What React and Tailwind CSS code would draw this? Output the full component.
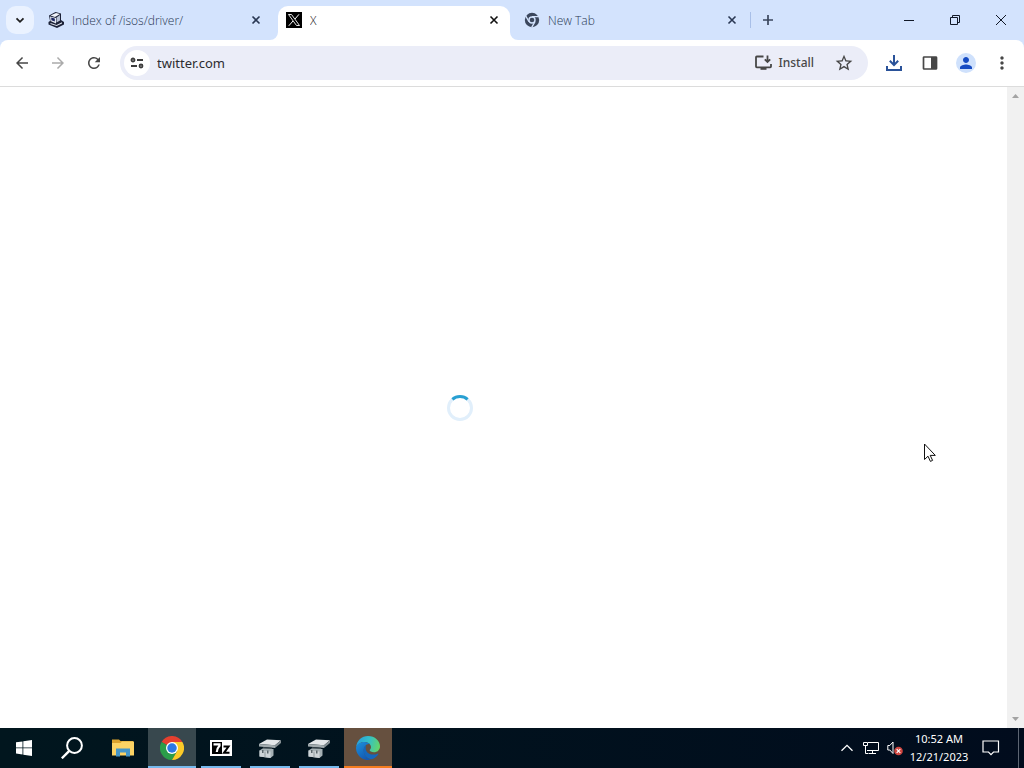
import React from "react";
import {
  MdArrowBack,
  MdArrowForward,
  MdRefresh,
  MdStarOutline,
  MdPerson,
  MdMoreVert,
} from "react-icons/md";

const svgProps = { xmlns: "http://www.w3.org/2000/svg", "aria-hidden": true };

function ServerFavicon() {
  return (
    <svg {...svgProps} viewBox="0 0 16 16" className="size-4 shrink-0">
      <path d="M1 3.500L7.500 0 13 1.500V8l3 2v2.500L9 16 .5 12.500V10L2 9z" fill="#1c2238" />
      <path d="M2.500 3.500L8 1l4 1-5 3z" fill="#f1f4fb" />
      <path d="M2 4.500l6 1.500v5.500L2.500 9z" fill="#e6ebf5" />
      <path d="M3.200 5.500l3.600 1v3l-3.400-1.200z" fill="#1b2560" />
      <path d="M8.500 5.500L12 3v5.500l-3.500 2z" fill="#b8c2d6" />
      <path d="M2.500 11l6 2 5.500-2.700v1.200L8.700 14 2.500 11.900z" fill="#dfe4ef" />
    </svg>
  );
}

function XFavicon() {
  return (
    <svg {...svgProps} viewBox="0 0 16 16" className="size-4 shrink-0">
      <rect width="16" height="16" fill="#000" />
      <path d="M2.500 2.500h3l8 11h-3z" fill="none" stroke="#fff" strokeWidth="0.9" />
      <path d="M13 2.300L9 7M7 9l-4.200 4.800" stroke="#fff" strokeWidth="1" />
    </svg>
  );
}

function GreyChrome() {
  return (
    <svg {...svgProps} viewBox="0 0 16 16" className="size-4 shrink-0">
      <circle cx="8" cy="8" r="7.2" fill="#3b475d" />
      <circle cx="8" cy="8" r="3.7" fill="#d3e3fd" />
      <path d="M8 4.700h6.800M5 9.700L1.700 3.900M11 9.700l-3.300 5.600" stroke="#d3e3fd" strokeWidth="1.3" />
      <circle cx="8" cy="8" r="2.3" fill="#3b475d" />
    </svg>
  );
}

function ChromeLogo() {
  return (
    <svg {...svgProps} viewBox="0 0 48 48" className="size-6">
      <path d="M24 24L3.200 12A24 24 0 0 1 44.800 12z" fill="#e5402f" />
      <path d="M24 24L3.200 12A24 24 0 0 0 24 48l10.400-18z" fill="#2b9d49" />
      <path d="M24 12h20.800A24 24 0 0 1 24 48l10.400-18z" fill="#fbca28" />
      <path d="M24 12a12 12 0 0 0-10.400 6L3.200 12 24 24z" fill="#e5402f" />
      <circle cx="24" cy="24" r="12" fill="#fff" />
      <circle cx="24" cy="24" r="9.5" fill="#2c78e4" />
    </svg>
  );
}

function CloseIcon() {
  return (
    <svg {...svgProps} viewBox="0 0 16 16" className="size-4" stroke="currentColor" strokeWidth="1.6">
      <path d="M4.500 4.500l7 7M11.500 4.500l-7 7" />
    </svg>
  );
}

function TabFoot({ side }) {
  return (
    <svg
      {...svgProps}
      viewBox="0 0 8 8"
      className={side === "left" ? "absolute -left-2 bottom-0 size-2" : "absolute -right-2 bottom-0 size-2"}
    >
      <path d={side === "left" ? "M8 0v8H0a8 8 0 0 0 8-8z" : "M0 0v8h8a8 8 0 0 1-8-8z"} fill="#fff" />
    </svg>
  );
}

function Tab({ icon, title, active }) {
  return (
    <div
      role="tab"
      aria-selected={!!active}
      className={
        active
          ? "relative flex h-[34px] min-w-0 max-w-[232px] flex-1 items-center gap-2 rounded-t-[10px] bg-white px-2 pb-1.5 text-[#111111]"
          : "flex h-[34px] min-w-0 max-w-[232px] flex-1 items-center gap-2 px-2 pb-1.5 text-[#2a3854]"
      }
    >
      {active && <TabFoot side="left" />}
      {icon}
      <span className="min-w-0 flex-1 truncate pt-0.5 font-['Open_Sans','Noto_Sans',sans-serif] text-[12px] font-light leading-4">
        {title}
      </span>
      <button type="button" aria-label={"Close " + title} className="size-4 shrink-0">
        <CloseIcon />
      </button>
      {active && <TabFoot side="right" />}
    </div>
  );
}

function TabStrip() {
  return (
    <header className="flex h-10 items-end bg-[#d3e3fd]">
      <button
        type="button"
        aria-label="Search tabs"
        className="mb-1.5 ml-1.5 grid size-7 shrink-0 place-items-center rounded-[10px] bg-[#eaf2ff] text-[#1f1f1f]"
      >
        <svg {...svgProps} viewBox="0 0 16 16" className="size-4" fill="none" stroke="currentColor" strokeWidth="1.8">
          <path d="M4.500 6.300L8 9.800l3.500-3.500" />
        </svg>
      </button>
      <div role="tablist" className="ml-1.5 flex min-w-0 flex-1 items-end gap-1.5">
        <Tab icon={<ServerFavicon />} title="Index of /isos/driver/" />
        <Tab icon={<XFavicon />} title="X" active />
        <Tab icon={<GreyChrome />} title="New Tab" />
        <div className="-ml-1 mb-1.5 flex h-7 shrink-0 items-center gap-[3px] text-[#3b475d]">
          <span className="h-4 w-px bg-[#a8bfe8]" />
          <button type="button" aria-label="New tab" className="grid size-7 place-items-center">
            <svg {...svgProps} viewBox="0 0 16 16" className="size-4" stroke="currentColor" strokeWidth="1.7">
              <path d="M8 3v10M3 8h10" />
            </svg>
          </button>
        </div>
      </div>
      <div className="flex h-10 shrink-0 text-[#111827]">
        <button type="button" aria-label="Minimize" className="grid w-[46px] place-items-center">
          <svg {...svgProps} viewBox="0 0 10 10" className="size-2.5" stroke="currentColor">
            <path d="M0 5.500h10" />
          </svg>
        </button>
        <button type="button" aria-label="Restore" className="grid w-[46px] place-items-center">
          <svg {...svgProps} viewBox="0 0 10 10" className="size-2.5" stroke="currentColor" fill="none">
            <path d="M.5 2.500h7v7h-7zM2.500 2.500v-2h7v7h-2" />
          </svg>
        </button>
        <button type="button" aria-label="Close window" className="grid w-[46px] place-items-center">
          <svg {...svgProps} viewBox="0 0 10 10" className="size-2.5" stroke="currentColor">
            <path d="M0 0l10 10M10 0L0 10" />
          </svg>
        </button>
      </div>
    </header>
  );
}

function ToolButton({ label, color = "text-[#474747]", children }) {
  return (
    <button type="button" aria-label={label} className={"grid size-7 shrink-0 place-items-center " + color}>
      {children}
    </button>
  );
}

function Toolbar() {
  return (
    <div className="bg-[#d3e3fd]">
      <nav className="flex h-[47px] items-center gap-2 rounded-t-lg border-b border-[#dcdcdc] bg-white px-2">
        <ToolButton label="Back">
          <MdArrowBack className="size-[18px]" />
        </ToolButton>
        <ToolButton label="Forward" color="text-[#ababab]">
          <MdArrowForward className="size-[18px]" />
        </ToolButton>
        <ToolButton label="Reload">
          <MdRefresh className="size-[18px]" />
        </ToolButton>
        <div className="mx-1 flex h-[34px] min-w-0 flex-1 items-center rounded-full bg-[#ebedf8] pl-1 pr-2.5">
          <button
            type="button"
            aria-label="View site information"
            className="grid size-[26px] shrink-0 place-items-center rounded-full bg-white text-[#3c3c3c]"
          >
            <svg {...svgProps} viewBox="0 0 16 16" className="size-4" fill="none" stroke="currentColor" strokeWidth="1.8">
              <circle cx="4" cy="5" r="1.5" />
              <path d="M8 5h6M2 11h6" />
              <circle cx="12" cy="11" r="1.5" />
            </svg>
          </button>
          <input
            type="text"
            aria-label="Address"
            defaultValue="twitter.com"
            className="ml-[7px] min-w-0 flex-1 bg-transparent text-[13px] leading-5 text-[#2c2c30] outline-none"
          />
          <button
            type="button"
            className="flex shrink-0 items-center gap-1.5 text-[12px] font-medium leading-5 text-[#474747]"
          >
            <svg {...svgProps} viewBox="0 0 18 18" className="size-[18px]" fill="none" stroke="currentColor" strokeWidth="1.8">
              <path d="M9.500 2.500H2.800a.8.8 0 0 0-.8.800v9.200a.8.8 0 0 0 .8.800h13.400a.8.8 0 0 0 .8-.8V10" />
              <path d="M13.500 1.500v6M10.800 5.300l2.700 2.700 2.700-2.700" />
              <path d="M6.500 13h6v2.800h-6z" fill="currentColor" stroke="none" />
            </svg>
            Install
          </button>
          <div className="ml-4">
            <ToolButton label="Bookmark this tab">
              <MdStarOutline className="size-5" />
            </ToolButton>
          </div>
        </div>
        <ToolButton label="Downloads" color="text-[#2a5299]">
          <svg {...svgProps} viewBox="0 0 18 18" className="size-[18px]" fill="none" stroke="currentColor" strokeWidth="2">
            <path d="M9 1v9.500M4.800 6.800L9 11l4.200-4.200M2 12v4h14v-4" />
          </svg>
        </ToolButton>
        <ToolButton label="Side panel">
          <svg {...svgProps} viewBox="0 0 16 16" className="size-4">
            <rect x="1.500" y="2" width="13" height="12" rx="0.6" fill="none" stroke="currentColor" strokeWidth="1.7" />
            <path d="M9 2h5.500v12H9z" fill="currentColor" />
          </svg>
        </ToolButton>
        <ToolButton label="Profile" color="text-[#164bc3]">
          <span className="grid size-5 place-items-center rounded-full bg-[#cfe1fc]">
            <MdPerson className="size-[18px]" />
          </span>
        </ToolButton>
        <ToolButton label="Menu">
          <MdMoreVert className="size-5" />
        </ToolButton>
      </nav>
    </div>
  );
}

function TaskButton({ label, className = "", bar = "", children }) {
  return (
    <button type="button" aria-label={label} className={"flex h-10 w-12 shrink-0 flex-col items-center " + className}>
      <span className="grid flex-1 place-items-center">{children}</span>
      {bar && <span className={"-mt-0.5 h-0.5 " + bar} />}
    </button>
  );
}

function FolderIcon() {
  return (
    <svg {...svgProps} viewBox="0 0 22 20" className="h-5 w-[22px]">
      <path d="M0 1.500h7L8.500 3H21v14H0z" fill="#dca32e" />
      <path d="M0 5h8.500L10 3.500h12V17.500H0z" fill="#fcd364" />
      <path d="M4 18.500V10.500h14v8h-4v-4H8v4z" fill="#4596c8" />
    </svg>
  );
}

function DriveToolIcon() {
  return (
    <svg {...svgProps} viewBox="0 0 24 22" className="h-[22px] w-6">
      <path d="M1 7L9 2.500l14 .8-6 5z" fill="#e4e7e9" />
      <path d="M1 7l16 1.300V11L1 9.500z" fill="#a2abae" />
      <path d="M17 8.300l6-5V6l-6 5z" fill="#858f93" />
      <path d="M5 9.900l9 .8v2H5z" fill="#39454b" />
      <path d="M1.500 13.500l3-2 11 .5v6.500l-3 2.500-11-1.500z" fill="#a5b0b4" />
      <path d="M1.500 13.500l11 1V21l-11-1.500z" fill="#cdd4d7" />
      <path d="M4 13h1.500v3H4zM9 13.500h1.500v3H9z" fill="#5c686d" />
      <path d="M7 14.500v5.500" stroke="#8f9a9e" />
    </svg>
  );
}

function EdgeLogo() {
  return (
    <svg {...svgProps} viewBox="0 0 24 24" className="size-6">
      <defs>
        <linearGradient id="edgeTop" x1="0" x2="1" y1="0.3" y2="0.5">
          <stop offset="0" stopColor="#289edb" />
          <stop offset="0.5" stopColor="#32bfc9" />
          <stop offset="1" stopColor="#64d66a" />
        </linearGradient>
        <linearGradient id="edgeLeft" x1="0" x2="0.6" y1="0" y2="1">
          <stop offset="0" stopColor="#1c91dc" />
          <stop offset="1" stopColor="#1258b2" />
        </linearGradient>
      </defs>
      <path d="M.2 11C.7 4.500 5.800 0 12 0c7 0 12 5 12 10.200 0 3.900-3 6-6 6-2.500 0-4.300-.9-4.300-1.900 0-.7 1.300-1.300 1.300-3C15 8.500 12.500 6 8.500 6 4.500 6 1.500 8 .2 11z" fill="url(#edgeTop)" />
      <path d="M0 12c.5-3.700 4-6 8.500-6 2.500 0 4.200 1 5 2-3-.5-5.700 2.500-5.700 6.500 0 4.500 3.200 8 7.200 9A12 12 0 0 1 0 12z" fill="url(#edgeLeft)" />
      <path d="M10.200 9.300c-2.700 1.700-3.400 5.200-1.800 8.700 1.700 3.700 5 5.600 8 5.100 2.600-1 4.700-2.700 5.900-4.800.3-.5-.2-.9-.7-.6-5 2.300-11.700.2-11.900-5.200-.1-1.200.1-2.300.5-3.200z" fill="#1467bd" />
    </svg>
  );
}

function Taskbar() {
  return (
    <footer className="flex h-10 items-stretch bg-linear-to-r from-[#01161e] to-[#010c1d] text-white">
      <TaskButton label="Start">
        <svg {...svgProps} viewBox="0 0 16 16" className="size-4" fill="#fff">
          <path d="M0 2.300l6.500-.9v6.100H0zM7.300 1.300L16 0v7.500H7.300zM0 8.300h6.500v6.200L0 13.600zM7.300 8.300H16V16l-8.700-1.300z" />
        </svg>
      </TaskButton>
      <TaskButton label="Search">
        <svg {...svgProps} viewBox="0 0 22 22" className="size-[22px]" fill="none" stroke="#fff" strokeWidth="2">
          <circle cx="13.5" cy="8.5" r="7.4" />
          <path d="M8.300 13.800L.8 21.300" strokeWidth="2.4" />
        </svg>
      </TaskButton>
      <div className="ml-[3px] flex gap-px">
        <TaskButton label="File Explorer">
          <FolderIcon />
        </TaskButton>
        <TaskButton label="Google Chrome" className="bg-[#38484e]" bar="w-12 bg-[#76b9ed]">
          <ChromeLogo />
        </TaskButton>
        <TaskButton label="7-Zip" bar="w-10 bg-[#76b9ed]">
          <svg {...svgProps} viewBox="0 0 22 16" className="h-4 w-[22px]">
            <rect width="22" height="16" fill="#fff" />
            <rect x="2" y="2" width="10" height="12" fill="#000" />
            <path d="M3.500 4.300h6v1.500c-2 2-2.600 3.700-2.700 6.200" fill="none" stroke="#fff" strokeWidth="2.2" />
            <path d="M13.500 6.500h5L14 12.800h5.500" fill="none" stroke="#000" strokeWidth="2" />
          </svg>
        </TaskButton>
        <TaskButton label="Server Tool" bar="w-10 bg-[#76b9ed]">
          <DriveToolIcon />
        </TaskButton>
        <TaskButton label="Server Tool, second window" bar="w-10 bg-[#76b9ed]">
          <DriveToolIcon />
        </TaskButton>
        <TaskButton label="Microsoft Edge" className="bg-[#66503f]" bar="w-12 bg-[#f57c1f]">
          <EdgeLogo />
        </TaskButton>
      </div>
      <div className="ml-auto flex items-center">
        <button type="button" aria-label="Show hidden icons" className="grid w-6 place-items-center">
          <svg {...svgProps} viewBox="0 0 12 8" className="h-2 w-3" fill="none" stroke="#fff" strokeWidth="1.3">
            <path d="M.5 6.800L6 1.300l5.500 5.500" />
          </svg>
        </button>
        <button type="button" aria-label="Network" className="grid w-6 place-items-center">
          <svg {...svgProps} viewBox="0 0 16 14" width="16" height="14" fill="none" stroke="#fff">
            <path d="M5 1.500h10.500v8H4M9.500 9.500v3M6 12.500h7M.5 1.500h4v3h-4zM2.500 4.500v8h3" />
          </svg>
        </button>
        <button type="button" aria-label="Volume muted" className="grid w-6 place-items-center">
          <svg {...svgProps} viewBox="0 0 16 16" width="16" height="16">
            <path d="M.8 5.500h2L6 2v11.500L2.800 10h-2z" fill="none" stroke="#fff" />
            <circle cx="11.5" cy="11" r="4.3" fill="#cf4640" />
            <path d="M9.700 9.200l3.600 3.600M13.300 9.200l-3.600 3.600" stroke="#fff" strokeWidth="1.2" />
          </svg>
        </button>
        <time className="flex w-16 flex-col items-center whitespace-nowrap text-[11px] leading-[18px]">
          <span>10:52 AM</span>
          <span>12/21/2023</span>
        </time>
        <button type="button" aria-label="Notifications" className="grid w-10 place-items-center">
          <svg {...svgProps} viewBox="0 0 18 16" width="18" height="16" fill="none" stroke="#fff" strokeWidth="1.2">
            <path d="M1 1h15.500v11h-5L9 14.700 6.500 12H1z" />
          </svg>
        </button>
        <button type="button" aria-label="Show desktop" className="ml-[7px] h-10 w-1.5 border-l border-[#5c6572]" />
      </div>
    </footer>
  );
}

export default function App() {
  return (
    <div className="relative flex min-h-screen flex-col bg-white font-['Noto_Sans','Open_Sans',sans-serif]">
      <TabStrip />
      <Toolbar />
      <div className="flex flex-1">
        <main className="flex flex-1 items-center justify-center pr-[87px]">
          <svg viewBox="0 0 26 26" role="img" aria-label="Loading" className="size-[26px]" fill="none" strokeWidth="3">
            <circle cx="13" cy="13" r="11.5" stroke="#e1effb" />
            <path d="M5.400 4.400A11.500 11.500 0 0 1 20.600 4.400" stroke="#28a0d2" />
          </svg>
        </main>
        <div className="flex w-[17px] flex-col items-center justify-between bg-[#f1f1f1] py-[7px]">
          <svg {...svgProps} viewBox="0 0 7 4" width="7" height="4">
            <path d="M3.500 0L7 4H0z" fill="#a3a3a3" />
          </svg>
          <svg {...svgProps} viewBox="0 0 7 4" width="7" height="4">
            <path d="M0 0h7L3.500 4z" fill="#a3a3a3" />
          </svg>
        </div>
      </div>
      <Taskbar />
      <svg {...svgProps} viewBox="0 0 12 19" className="absolute left-[924px] top-[443px] h-[19px] w-3">
        <path d="M.5 1v15.500L4 13.200l2.400 5.200 2.200-1-2.400-5h5.100z" fill="#fff" stroke="#111" strokeWidth="1" />
      </svg>
    </div>
  );
}
